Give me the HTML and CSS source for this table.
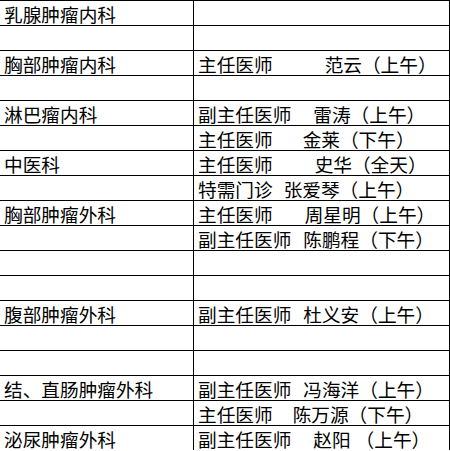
FILE: index.html
```html
<!DOCTYPE html>
<html lang="zh-CN">
<head>
<meta charset="utf-8">
<title>门诊排班</title>
<link rel="stylesheet" href="styles.css">
</head>
<body>
<div class="sheet">
  <div class="cell dept">乳腺肿瘤内科</div><div class="cell doc"></div>
  <div class="cell dept"></div><div class="cell doc"></div>
  <div class="cell dept">胸部肿瘤内科</div><div class="cell doc"><span>主任医师</span><span class="g52">范云（上午）</span></div>
  <div class="cell dept"></div><div class="cell doc"></div>
  <div class="cell dept">淋巴瘤内科</div><div class="cell doc"><span>副主任医师</span><span class="g22">雷涛（上午）</span></div>
  <div class="cell dept"></div><div class="cell doc"><span>主任医师</span><span class="g30">金莱（下午）</span></div>
  <div class="cell dept">中医科</div><div class="cell doc"><span>主任医师</span><span class="g42">史华（全天）</span></div>
  <div class="cell dept"></div><div class="cell doc"><span>特需门诊</span><span class="g11">张爱琴（上午）</span></div>
  <div class="cell dept">胸部肿瘤外科</div><div class="cell doc"><span>主任医师</span><span class="g32">周星明（上午）</span></div>
  <div class="cell dept"></div><div class="cell doc"><span>副主任医师</span><span class="g12">陈鹏程（下午）</span></div>
  <div class="cell dept"></div><div class="cell doc"></div>
  <div class="cell dept"></div><div class="cell doc"></div>
  <div class="cell dept">腹部肿瘤外科</div><div class="cell doc"><span>副主任医师</span><span class="g12">杜义安（上午）</span></div>
  <div class="cell dept"></div><div class="cell doc"></div>
  <div class="cell dept"></div><div class="cell doc"></div>
  <div class="cell dept">结、直肠肿瘤外科</div><div class="cell doc"><span>副主任医师</span><span class="g12">冯海洋（上午）</span></div>
  <div class="cell dept"></div><div class="cell doc"><span>主任医师</span><span class="g20">陈万源（下午）</span></div>
  <div class="cell dept">泌尿肿瘤外科</div><div class="cell doc"><span>副主任医师</span><span class="g22">赵阳</span><span class="g5">（上午）</span></div>
</div>
</body>
</html>
```
FILE: styles.css
```css
html, body {
  margin: 0;
  padding: 0;
  background: #ffffff;
}
.sheet {
  display: grid;
  grid-template-columns: 194px 256px;
  width: 450px;
  font-family: "Noto Sans CJK SC", "Noto Sans", sans-serif;
  font-size: 18.67px;
  color: #000000;
}
.cell {
  box-sizing: border-box;
  height: 25px;
  border-top: 1px solid #000000;
  border-right: 1px solid #000000;
  padding-left: 4px;
  line-height: 25px;
  white-space: nowrap;
}
.g5 { margin-left: 5px; }
.g11 { margin-left: 11px; }
.g12 { margin-left: 12px; }
.g20 { margin-left: 20px; }
.g22 { margin-left: 22px; }
.g30 { margin-left: 30px; }
.g32 { margin-left: 32px; }
.g42 { margin-left: 42px; }
.g52 { margin-left: 52px; }
```
